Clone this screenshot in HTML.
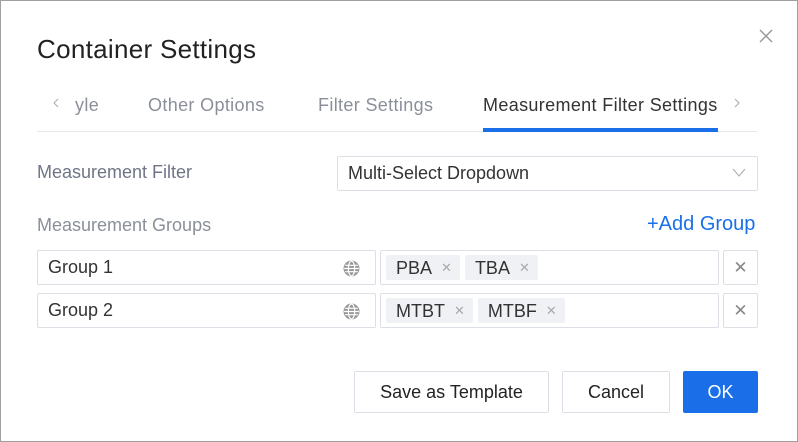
<!DOCTYPE html><html><head><style>
*{box-sizing:border-box;margin:0;padding:0}
body{width:798px;height:442px;background:#fff;font-family:"Liberation Sans",sans-serif;position:relative;overflow:hidden}
.a{position:absolute}
.t{font-size:18px;color:#8a8f99;top:95px;letter-spacing:0.35px}
.box{position:absolute;border:1px solid #dcdfe6;border-radius:2px;background:#fff}
.tag{display:inline-block;background:#f0f1f4;border-radius:2px;height:25px;line-height:25px;padding:0 8px 0 10px;font-size:18px;color:#333;margin-right:5px}
.tag i{font-style:normal;color:#aaa;font-size:13px;margin-left:9px;vertical-align:2px}
.btn{position:absolute;top:371px;height:42px;border:1px solid #dcdfe6;font-size:18px;color:#222;text-align:center;line-height:40px;border-radius:2px}
.x{text-align:center;line-height:33px;color:#888;font-size:17px}
</style></head><body>
<div class="a" style="left:0;top:0;width:798px;height:442px;border:1px solid #a0a0a0"></div>
<div class="a" style="left:37px;top:34px;font-size:26px;letter-spacing:0.3px;color:#222">Container Settings</div>
<svg class="a" style="left:759px;top:29px" width="14" height="14" viewBox="0 0 14 14"><path d="M1 1L13 13M13 1L1 13" stroke="#999" stroke-width="1.5"/></svg>
<svg class="a" style="left:52px;top:98px" width="8" height="10" viewBox="0 0 8 10"><path d="M6 1L2 5L6 9" stroke="#aaa" fill="none"/></svg>
<div class="a t" style="left:75px">yle</div>
<div class="a t" style="left:148px">Other Options</div>
<div class="a t" style="left:318px">Filter Settings</div>
<div class="a t" style="left:483px;color:#333">Measurement Filter Settings</div>
<svg class="a" style="left:733px;top:98px" width="8" height="10" viewBox="0 0 8 10"><path d="M2 1L6 5L2 9" stroke="#aaa" fill="none"/></svg>
<div class="a" style="left:37px;top:131px;width:720px;height:1px;background:#e6e8ec"></div>
<div class="a" style="left:483px;top:128px;width:235px;height:4px;background:#1a6fe8"></div>
<div class="a" style="left:37px;top:162px;font-size:18px;color:#6f7585">Measurement Filter</div>
<div class="box" style="left:337px;top:156px;width:421px;height:35px;padding:6px 10px;font-size:18px;color:#333">Multi-Select Dropdown<svg style="position:absolute;right:11px;top:11px" width="14" height="9" viewBox="0 0 14 9"><path d="M1 1L7 8L13 1" stroke="#aaa" fill="none"/></svg></div>
<div class="a" style="left:37px;top:215px;font-size:18px;color:#8a8f99">Measurement Groups</div>
<div class="a" style="left:647px;top:213px;font-size:20px;color:#1a6fe8">+Add Group</div>
<div class="box" style="left:37px;top:250px;width:339px;height:35px;padding:6px 10px;font-size:18px;color:#333">Group 1<svg style="position:absolute;right:15px;top:9px" width="17" height="17" viewBox="0 0 16 16"><circle cx="8" cy="8" r="7.5" fill="#999"/><g stroke="#fff" stroke-width="1.1" fill="none"><ellipse cx="8" cy="8" rx="3" ry="7"/><path d="M1 8h14M2 5h12M2 11h12"/></g></svg></div>
<div class="box" style="left:380px;top:250px;width:339px;height:35px;padding:4px 5px">
<span class="tag">PBA<i>✕</i></span><span class="tag">TBA<i>✕</i></span></div>
<div class="box x" style="left:723px;top:250px;width:35px;height:35px">✕</div>
<div class="box" style="left:37px;top:293px;width:339px;height:35px;padding:6px 10px;font-size:18px;color:#333">Group 2<svg style="position:absolute;right:15px;top:9px" width="17" height="17" viewBox="0 0 16 16"><circle cx="8" cy="8" r="7.5" fill="#999"/><g stroke="#fff" stroke-width="1.1" fill="none"><ellipse cx="8" cy="8" rx="3" ry="7"/><path d="M1 8h14M2 5h12M2 11h12"/></g></svg></div>
<div class="box" style="left:380px;top:293px;width:339px;height:35px;padding:4px 5px">
<span class="tag">MTBT<i>✕</i></span><span class="tag">MTBF<i>✕</i></span></div>
<div class="box x" style="left:723px;top:293px;width:35px;height:35px">✕</div>
<div class="btn" style="left:354px;width:195px">Save as Template</div>
<div class="btn" style="left:562px;width:108px">Cancel</div>
<div class="btn" style="left:683px;width:75px;background:#1a6fe8;border-color:#1a6fe8;color:#fff">OK</div>
</body></html>
